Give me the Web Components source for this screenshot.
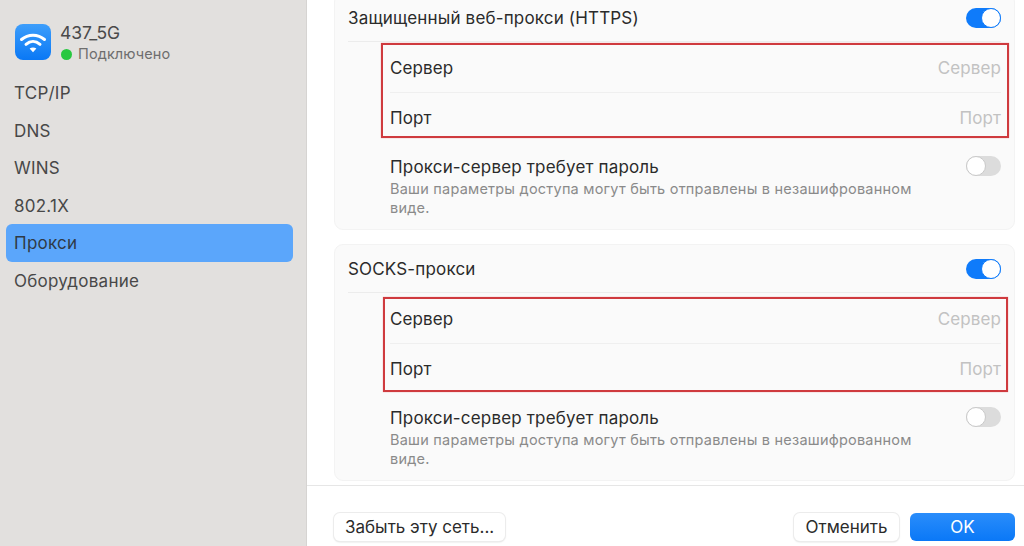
<!DOCTYPE html>
<html lang="ru">
<head>
<meta charset="utf-8">
<title>Прокси</title>
<style>
  html, body { margin: 0; height: 100%; overflow: hidden; background: #fff; }
  body { font-family: Inter, "Liberation Sans", sans-serif; color: #2b2b2b; }
</style>
</head>
<body>
<net-dialog>
  <net-sidebar slot="side" name="437_5G" status="Подключено">
    <side-item>TCP/IP</side-item>
    <side-item>DNS</side-item>
    <side-item>WINS</side-item>
    <side-item>802.1X</side-item>
    <side-item selected>Прокси</side-item>
    <side-item>Оборудование</side-item>
  </net-sidebar>
  <proxy-card title="Защищенный веб-прокси (HTTPS)" style="--mark-top:49px;--mark-left:46px;--mark-right:5px"></proxy-card>
  <proxy-card title="SOCKS-прокси" style="--mark-top:52px;--mark-left:48px;--mark-right:6px"></proxy-card>
  <mac-button slot="left">Забыть эту сеть...</mac-button>
  <mac-button slot="right" wide>Отменить</mac-button>
  <mac-button slot="right" wide primary>OK</mac-button>
</net-dialog>

<script>
class NetDialog extends HTMLElement {
  constructor() {
    super();
    this.attachShadow({ mode: "open" }).innerHTML = `
      <style>
        :host { display: flex; width: 1024px; height: 546px; overflow: hidden; }
        .side { flex: 0 0 307px; background: #e2e0de; box-shadow: inset -1px 0 0 #d6d4d2; }
        .main { flex: 1; min-width: 0; display: flex; flex-direction: column; }
        .scroll {
          height: 486px; box-sizing: border-box; overflow: hidden;
          display: flex; flex-direction: column; justify-content: flex-end; gap: 14px;
          padding: 0 9px 4px 27px; border-bottom: 1px solid #e6e6e6;
        }
        .foot { flex: 1; display: flex; justify-content: space-between; padding: 27px 9px 0 27px; }
        .right { display: flex; gap: 11px; }
      </style>
      <div class="side"><slot name="side"></slot></div>
      <div class="main">
        <div class="scroll"><slot></slot></div>
        <div class="foot">
          <div><slot name="left"></slot></div>
          <div class="right"><slot name="right"></slot></div>
        </div>
      </div>`;
  }
}

class NetSidebar extends HTMLElement {
  constructor() {
    super();
    this.attachShadow({ mode: "open" }).innerHTML = `
      <style>
        :host { display: block; padding: 24px 14px 0 6px; }
        .head { display: flex; gap: 9px; padding-left: 9px; height: 36px; margin-bottom: 14px; }
        svg { display: block; flex: none; }
        .name { font-size: 17.5px; line-height: 18px; color: #4a4a4a; }
        .status { display: flex; align-items: center; gap: 6px; font-size: 14.5px; letter-spacing: .1px; line-height: 18px; color: #6e6e6e; margin-top: 3px; padding-left: 1px; }
        .dot { width: 11px; height: 11px; border-radius: 50%; background: #28c840; }
        .list { display: flex; flex-direction: column; }
      </style>
      <div class="head">
        <svg width="36" height="36" viewBox="0 0 36 36">
          <defs><linearGradient id="g" x1="0" y1="0" x2="0" y2="1"><stop offset="0" stop-color="#3d9efb"/><stop offset="1" stop-color="#0a78f5"/></linearGradient></defs>
          <rect width="36" height="36" rx="8" fill="url(#g)"/>
          <g fill="none" stroke="#fff" stroke-width="3" stroke-linecap="round">
            <path d="M6.500 15.500c6.600-5.800 16.400-5.800 23 0"/>
            <path d="M11 20.300c4.200-3.600 9.800-3.600 14 0"/>
          </g>
          <path d="M14.600 24.600c2-1.500 4.800-1.500 6.800 0L18 28.300z" fill="#fff"/>
        </svg>
        <div>
          <div class="name"></div>
          <div class="status"><span class="dot"></span><span class="label"></span></div>
        </div>
      </div>
      <div class="list"><slot></slot></div>`;
  }
  connectedCallback() {
    this.shadowRoot.querySelector(".name").textContent = this.getAttribute("name");
    this.shadowRoot.querySelector(".label").textContent = this.getAttribute("status");
  }
}

class SideItem extends HTMLElement {
  constructor() {
    super();
    this.attachShadow({ mode: "open" }).innerHTML = `
      <style>
        :host { display: flex; align-items: center; box-sizing: border-box; height: 37.5px; padding: 1px 0 0 8px; border-radius: 6px; font-size: 17px; letter-spacing: .25px; color: #484848; }
        :host([selected]) { background: #5ba6fb; color: #2f3a46; }
      </style>
      <slot></slot>`;
  }
}

class MacToggle extends HTMLElement {
  constructor() {
    super();
    this.attachShadow({ mode: "open" }).innerHTML = `
      <style>
        :host { display: flex; justify-content: flex-start; flex: none; box-sizing: border-box; width: 35px; height: 20px; border-radius: 10px; background: #dcdcdc; }
        :host([on]) { background: #0f7bfa; justify-content: flex-end; }
        i { width: 20px; height: 20px; box-sizing: border-box; border-radius: 50%; background: #fff; border: 1px solid #c9c9c9; }
        :host([on]) i { border-color: #0f7bfa; }
      </style>
      <i></i>`;
  }
}

class FormRow extends HTMLElement {
  constructor() {
    super();
    this.attachShadow({ mode: "open" }).innerHTML = `
      <style>
        :host { display: flex; align-items: center; justify-content: space-between; box-sizing: border-box; height: 50px; padding-top: 2px; font-size: 17px; letter-spacing: .1px; color: #2b2b2b; }
        :host([line]) { box-shadow: 0 1px 0 #efefef; }
        .hint { color: #c2c2c2; }
      </style>
      <span><slot></slot></span><span class="hint"></span>`;
  }
  connectedCallback() {
    this.shadowRoot.querySelector(".hint").textContent = this.getAttribute("hint");
  }
}

class ProxyCard extends HTMLElement {
  constructor() {
    super();
    this.attachShadow({ mode: "open" }).innerHTML = `
      <style>
        :host { display: block; flex: none; position: relative; box-sizing: border-box; background: #fafafa; border: 1px solid #f3f3f3; border-radius: 9px; padding: 0 13px; font-size: 17px; letter-spacing: .17px; color: #2b2b2b; }
        .top { display: flex; align-items: center; justify-content: space-between; height: 47px; border-bottom: 1px solid #ececec; }
        .body { padding-left: 42px; }
        .pass { display: flex; justify-content: space-between; padding: 15px 0 12px; }
        .pass mac-toggle { margin-top: -1px; }
        .pass p { margin: 2px 0 0; width: 535px; font-size: 14.5px; letter-spacing: .22px; line-height: 19px; color: #8a8a8a; }
        .mark { position: absolute; left: var(--mark-left); right: var(--mark-right); top: var(--mark-top); height: 95px; border: 2px solid #cf3a3e; box-shadow: 0 0 1px #e58a8c; box-sizing: border-box; pointer-events: none; }
      </style>
      <div class="top"><span class="title"></span><mac-toggle on></mac-toggle></div>
      <div class="body">
        <form-row hint="Сервер" line>Сервер</form-row>
        <form-row hint="Порт">Порт</form-row>
        <div class="pass">
          <div>
            <div>Прокси-сервер требует пароль</div>
            <p>Ваши параметры доступа могут быть отправлены в незашифрованном виде.</p>
          </div>
          <mac-toggle></mac-toggle>
        </div>
      </div>
      <div class="mark"></div>`;
  }
  connectedCallback() {
    this.shadowRoot.querySelector(".title").textContent = this.getAttribute("title");
  }
}

class MacButton extends HTMLElement {
  constructor() {
    super();
    this.attachShadow({ mode: "open" }).innerHTML = `
      <style>
        :host { display: flex; align-items: center; justify-content: center; box-sizing: border-box; height: 28px; padding: 0 11px; border-radius: 6px; background: #fff; font-size: 17px; color: #2b2b2b; box-shadow: 0 0 0 1px #ececec, 0 1px 2px rgba(0,0,0,.18); }
        :host([wide]) { width: 105px; }
        :host([primary]) { background: linear-gradient(#2a8dfb, #0a78f7); color: #fff; box-shadow: none; }
      </style>
      <slot></slot>`;
  }
}

customElements.define("net-dialog", NetDialog);
customElements.define("net-sidebar", NetSidebar);
customElements.define("side-item", SideItem);
customElements.define("mac-toggle", MacToggle);
customElements.define("form-row", FormRow);
customElements.define("proxy-card", ProxyCard);
customElements.define("mac-button", MacButton);
</script>
</body>
</html>
